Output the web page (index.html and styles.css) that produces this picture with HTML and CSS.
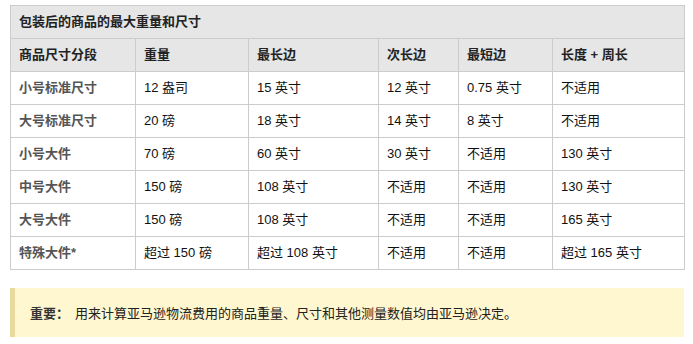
FILE: index.html
```html
<!DOCTYPE html>
<html lang="zh-CN">
<head>
<meta charset="utf-8">
<link rel="stylesheet" href="styles.css">
</head>
<body>
<div class="page">
  <table class="size-table">
    <colgroup>
      <col class="c1"><col class="c2"><col class="c3"><col class="c4"><col class="c5"><col class="c6">
    </colgroup>
    <thead>
      <tr class="title-row"><th colspan="6">包装后的商品的最大重量和尺寸</th></tr>
      <tr class="head-row">
        <th>商品尺寸分段</th><th>重量</th><th>最长边</th><th>次长边</th><th>最短边</th><th>长度 + 周长</th>
      </tr>
    </thead>
    <tbody>
      <tr><td class="tier">小号标准尺寸</td><td>12 盎司</td><td>15 英寸</td><td>12 英寸</td><td>0.75 英寸</td><td>不适用</td></tr>
      <tr><td class="tier">大号标准尺寸</td><td>20 磅</td><td>18 英寸</td><td>14 英寸</td><td>8 英寸</td><td>不适用</td></tr>
      <tr><td class="tier">小号大件</td><td>70 磅</td><td>60 英寸</td><td>30 英寸</td><td>不适用</td><td>130 英寸</td></tr>
      <tr><td class="tier">中号大件</td><td>150 磅</td><td>108 英寸</td><td>不适用</td><td>不适用</td><td>130 英寸</td></tr>
      <tr><td class="tier">大号大件</td><td>150 磅</td><td>108 英寸</td><td>不适用</td><td>不适用</td><td>165 英寸</td></tr>
      <tr><td class="tier">特殊大件*</td><td>超过 150 磅</td><td>超过 108 英寸</td><td>不适用</td><td>不适用</td><td>超过 165 英寸</td></tr>
    </tbody>
  </table>
  <div class="note"><strong>重要：</strong>用来计算亚马逊物流费用的商品重量、尺寸和其他测量数值均由亚马逊决定。</div>
</div>
</body>
</html>
```
FILE: styles.css
```css
html, body {
  margin: 0;
  padding: 0;
  background: #ffffff;
}
body {
  font-family: "Liberation Sans", "Noto Sans CJK SC", sans-serif;
  font-size: 13px;
  color: #111111;
}
.page {
  padding: 5px 9px 0 10px;
  display: flex;
  flex-direction: column;
  gap: 18px;
}
.size-table {
  width: 674px;
  border-collapse: collapse;
  table-layout: fixed;
}
.c1 { width: 125px; }
.c2 { width: 113px; }
.c3 { width: 130px; }
.c4 { width: 80px; }
.c5 { width: 94px; }
.c6 { width: 132px; }
.size-table th,
.size-table td {
  border: 1px solid #cccccc;
  height: 32px;
  padding: 0 8px;
  text-align: left;
  vertical-align: middle;
  white-space: nowrap;
  line-height: 16px;
}
.size-table th {
  background: #e6e6e6;
  font-weight: bold;
  color: #222222;
}
.size-table td.tier {
  font-weight: bold;
  color: #555555;
}
.note {
  width: 674px;
  box-sizing: border-box;
  height: 49px;
  background: #fff7d0;
  border-left: 5px solid #e8d99c;
  padding: 0 0 0 15px;
  display: flex;
  align-items: center;
  color: #222222;
}
.note strong {
  color: #333333;
  font-family: "Noto Sans CJK SC", sans-serif;
  margin-right: 6px;
}
```
